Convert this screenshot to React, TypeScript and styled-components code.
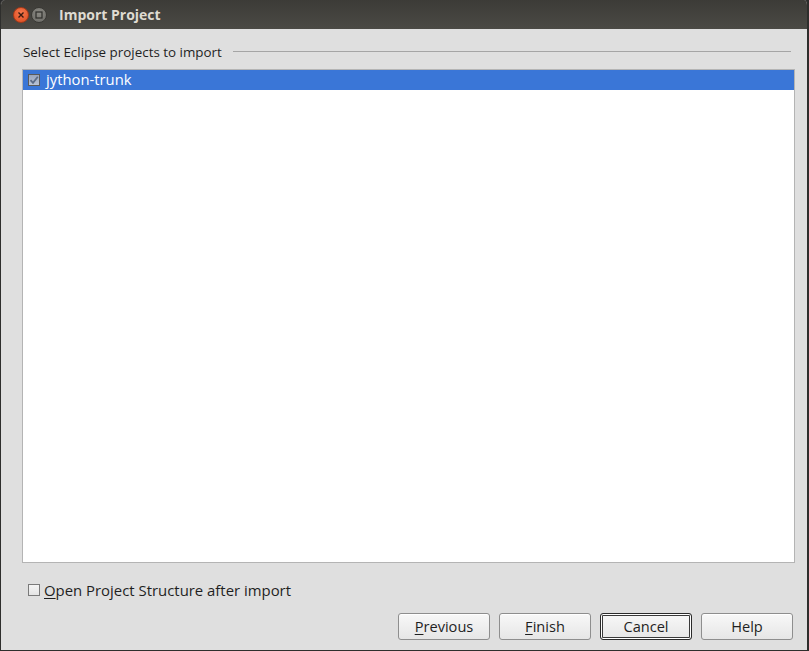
import React from "react";
import styled, { createGlobalStyle } from "styled-components";

const Global = createGlobalStyle`
  html, body { margin: 0; padding: 0; background: #2b2b2b; }
  body { font-family: "Open Sans", "Noto Sans", "DejaVu Sans", sans-serif; }
`;

const Window = styled.div`
  width: 809px;
  height: 651px;
  box-sizing: border-box;
  display: flex;
  flex-direction: column;
  background: #dfdfdf;
  border-left: 1px solid #2e2e2c;
  border-right: 2px solid #2e2e2c;
  border-bottom: 1px solid #2e2e2c;
  border-radius: 5px 5px 0 0;
  overflow: hidden;
`;

const TitleBar = styled.div`
  height: 29px;
  flex: none;
  display: flex;
  align-items: center;
  background: linear-gradient(#3c3b37, #4b4a45);
  padding-left: 12px;
  gap: 2px;
`;

const WinButton = styled.div<{ $kind: "close" | "max" }>`
  width: 16px;
  height: 16px;
  border-radius: 50%;
  display: flex;
  align-items: center;
  justify-content: center;
  box-sizing: border-box;
  background: ${(p) =>
    p.$kind === "close"
      ? "radial-gradient(circle at 50% 35%, #f5794e, #dc4a1e)"
      : "radial-gradient(circle at 50% 35%, #8a8983, #6a6964)"};
  border: 1px solid ${(p) => (p.$kind === "close" ? "#a73a18" : "#3a3935")};
`;

const TitleText = styled.div`
  color: #dfdbd2;
  font-weight: 700;
  font-size: 14px;
  margin-left: 10px;
  margin-top: -1px;
`;

const Content = styled.div`
  flex: 1;
  display: flex;
  flex-direction: column;
  padding: 14px 12px 9px 21px;
  min-height: 0;
`;

const GroupHeader = styled.div`
  display: flex;
  align-items: center;
  gap: 11px;
  height: 18px;
  font-size: 13.4px;
  color: #1f1f1f;
  padding-left: 1px;
`;

const Rule = styled.div`
  flex: 1;
  height: 1px;
  background: #a5a5a5;
  margin-right: 4px;
  margin-top: -1px;
`;

const List = styled.div`
  margin-top: 8px;
  height: 494px;
  background: #ffffff;
  border: 1px solid #b4b4b4;
  box-sizing: border-box;
  padding: 0;
`;

const Row = styled.div<{ $selected?: boolean }>`
  height: 20px;
  display: flex;
  align-items: center;
  gap: 6px;
  padding-left: 5px;
  background: ${(p) => (p.$selected ? "#3a76d7" : "transparent")};
  color: ${(p) => (p.$selected ? "#ffffff" : "#1f1f1f")};
  font-size: 14.8px;
  line-height: 18px;

  & > span {
    margin-top: -3px;
  }
`;

const Box = styled.div<{ $checked?: boolean; $dark?: boolean }>`
  width: 12px;
  height: 12px;
  box-sizing: border-box;
  border: 1px solid ${(p) => (p.$dark ? "#5a5a5a" : "#7a7a7a")};
  background: ${(p) =>
    p.$dark ? "linear-gradient(#9aa6bd, #b9c3d6)" : "linear-gradient(#f4f4f4, #e4e4e4)"};
  display: flex;
  align-items: center;
  justify-content: center;
  flex: none;
`;

const OptionRow = styled.label`
  display: flex;
  align-items: center;
  gap: 4px;
  margin-top: 18px;
  padding-left: 6px;
  font-size: 14.9px;
  color: #1f1f1f;
  height: 18px;
`;

const U = styled.span`
  text-decoration: underline;
  text-underline-offset: 2px;
`;

const ButtonRow = styled.div`
  display: flex;
  justify-content: flex-end;
  gap: 9px;
  margin-top: 14px;
  padding-right: 2px;
`;

const Button = styled.button<{ $focused?: boolean }>`
  width: 92px;
  height: 27px;
  box-sizing: border-box;
  font-family: inherit;
  font-size: 14.6px;
  color: #1f1f1f;
  border-radius: 3px;
  border: 1px solid ${(p) => (p.$focused ? "#2a2a2a" : "#8e8e8e")};
  background: linear-gradient(#f8f8f8, #e6e6e6);
  box-shadow: ${(p) => (p.$focused ? "inset 0 0 0 1px #ffffff, inset 0 0 0 2px #3a3a3a" : "inset 0 1px 0 #ffffff")};
  padding: 0 0 2px;
  display: flex;
  align-items: center;
  justify-content: center;
`;

const Check = () => (
  <svg width="10" height="10" viewBox="0 0 10 10">
    <path d="M1.5 5.2 L4 7.8 L8.8 1.8" fill="none" stroke="#5b6b86" strokeWidth="1.8" />
  </svg>
);

export default function App() {
  return (
    <>
      <Global />
      <Window>
        <TitleBar>
          <WinButton $kind="close">
            <svg width="8" height="8" viewBox="0 0 8 8">
              <path d="M1.5 1.5 L6.5 6.5 M6.5 1.5 L1.5 6.5" stroke="#3a1a10" strokeWidth="1.4" />
            </svg>
          </WinButton>
          <WinButton $kind="max">
            <svg width="8" height="8" viewBox="0 0 8 8">
              <rect x="1" y="1" width="6" height="6" fill="none" stroke="#2e2e2b" strokeWidth="1.2" />
            </svg>
          </WinButton>
          <TitleText>Import Project</TitleText>
        </TitleBar>
        <Content>
          <GroupHeader>
            <span>Select Eclipse projects to import</span>
            <Rule />
          </GroupHeader>
          <List>
            <Row $selected>
              <Box $checked $dark>
                <Check />
              </Box>
              <span>jython-trunk</span>
            </Row>
          </List>
          <OptionRow>
            <Box />
            <span>
              <U>O</U>pen Project Structure after import
            </span>
          </OptionRow>
          <ButtonRow>
            <Button>
              <span>
                <U>P</U>revious
              </span>
            </Button>
            <Button>
              <span>
                <U>F</U>inish
              </span>
            </Button>
            <Button $focused>Cancel</Button>
            <Button>Help</Button>
          </ButtonRow>
        </Content>
      </Window>
    </>
  );
}
